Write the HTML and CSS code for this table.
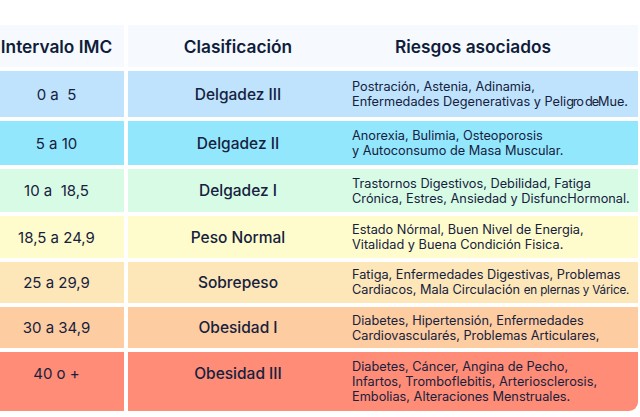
FILE: index.html
```html
<!DOCTYPE html>
<html lang="es">
<head>
<meta charset="utf-8">
<title>Intervalo IMC</title>
<link rel="stylesheet" href="styles.css">
</head>
<body>
<div class="table">
  <div class="row head">
    <div class="c1">Intervalo IMC</div>
    <div class="rest">
      <div class="c2">Clasificación</div>
      <div class="c3 h3">Riesgos asociados</div>
    </div>
  </div>
  <div class="row r1">
    <div class="c1">0 a&nbsp; 5</div>
    <div class="rest">
      <div class="c2">Delgadez III</div>
      <div class="c3">Postración, Astenia, Adinamia,<br>Enfermedades Degenerativas y Peli<span class="squeeze">gro de</span>Mue.</div>
    </div>
  </div>
  <div class="row r2">
    <div class="c1">5 a 10</div>
    <div class="rest">
      <div class="c2">Delgadez II</div>
      <div class="c3">Anorexia, Bulimia, Osteoporosis<br>y Autoconsumo de Masa Muscular.</div>
    </div>
  </div>
  <div class="row r3">
    <div class="c1">10 a&nbsp; 18,5</div>
    <div class="rest">
      <div class="c2">Delgadez I</div>
      <div class="c3">Trastornos Digestivos, Debilidad, Fatiga<br>Crónica, Estres, Ansiedad y DisfuncHormonal.</div>
    </div>
  </div>
  <div class="row r4">
    <div class="c1">18,5 a 24,9</div>
    <div class="rest">
      <div class="c2">Peso Normal</div>
      <div class="c3">Estado Nórmal, Buen Nivel de Energia,<br>Vitalidad y Buena Condición Fisica.</div>
    </div>
  </div>
  <div class="row r5">
    <div class="c1">25 a 29,9</div>
    <div class="rest">
      <div class="c2">Sobrepeso</div>
      <div class="c3">Fatiga, Enfermedades Digestivas, Problemas<br>Cardiacos, Mala Circulación <span class="small">en plernas y Várice.</span></div>
    </div>
  </div>
  <div class="row r6">
    <div class="c1">30 a 34,9</div>
    <div class="rest">
      <div class="c2">Obesidad I</div>
      <div class="c3">Diabetes, Hipertensión, Enfermedades<br>Cardiovascularés, Problemas Articulares,</div>
    </div>
  </div>
  <div class="row r7">
    <div class="c1 top">40 o +</div>
    <div class="rest">
      <div class="c2 top">Obesidad III</div>
      <div class="c3">Diabetes, Cáncer, Angina de Pecho,<br>Infartos, Tromboflebitis, Arteriosclerosis,<br>Embolias, Alteraciones Menstruales.</div>
    </div>
  </div>
</div>
</body>
</html>
```
FILE: styles.css
```css
html, body {
  margin: 0;
  padding: 0;
  background: #ffffff;
}
body {
  font-family: Inter, "Noto Sans", sans-serif;
  color: #16213d;
  width: 640px;
  height: 417px;
  overflow: hidden;
}
.table {
  display: flex;
  flex-direction: column;
  gap: 4px;
  margin-top: 25px;
  margin-left: -11px;
  width: 649px;
}
.row {
  display: flex;
  gap: 4px;
  height: 41px;
}
.c1 {
  width: 135px;
  flex: none;
  display: flex;
  align-items: center;
  justify-content: center;
  font-size: 15px;
}
.rest {
  flex: 1;
  display: flex;
}
.c2 {
  width: 220px;
  flex: none;
  display: flex;
  align-items: center;
  justify-content: center;
  font-size: 15.5px;
  font-weight: 500;
}
.c3 {
  flex: 1;
  display: block;
  align-self: center;
  padding-left: 4px;
  font-size: 12.75px;
  line-height: 15px;
  white-space: nowrap;
}
.head { height: 42px; }
.head .c1, .head .c2, .head .c3 {
  font-size: 17.3px;
  font-weight: 600;
  color: #0f1d3a;
}
.head .h3 { padding-left: 47px; }
.head .c1, .head .rest { background: #f6f9fd; }

.r1 { height: 46px; }
.r2 { height: 44px; }
.r3 { height: 43px; }
.r4 { height: 42px; }
.r7 { height: 59px; }

.r1 .c1, .r1 .rest { background: #bfe3fc; }
.r2 .c1, .r2 .rest { background: #93e7fd; }
.r3 .c1, .r3 .rest { background: #d8fbe5; }
.r4 .c1, .r4 .rest { background: #fefccc; }
.r5 .c1, .r5 .rest { background: #fde7b9; }
.r6 .c1, .r6 .rest { background: #fdcca1; }
.r7 .c1, .r7 .rest { background: #fe8c77; }
.r7 .rest { border-bottom-right-radius: 9px; }

.top {
  align-items: flex-start;
  padding-top: 12px;
}
.squeeze {
  letter-spacing: -1.2px;
}
.small {
  font-size: 11.7px;
  letter-spacing: -0.2px;
}
```
